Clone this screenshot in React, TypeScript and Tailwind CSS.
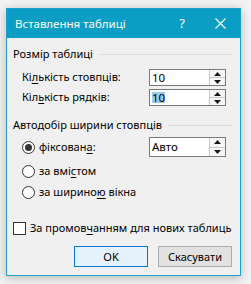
import React from 'react';

const font = { fontFamily: '"Noto Sans", "Liberation Sans", sans-serif' };

const U: React.FC<{ children: React.ReactNode }> = ({ children }) => (
  <span className="underline underline-offset-2 decoration-1">{children}</span>
);

const Spinner: React.FC = () => (
  <div className="flex flex-col w-[16px] h-full border-l border-[#c8c8c8]">
    <div className="flex-1 flex items-center justify-center bg-[#f7f7f7] border-b border-[#c8c8c8]">
      <svg width="7" height="4" viewBox="0 0 7 4"><path d="M0 4 L3.5 0 L7 4 Z" fill="#1a1a1a" /></svg>
    </div>
    <div className="flex-1 flex items-center justify-center bg-[#f7f7f7]">
      <svg width="7" height="4" viewBox="0 0 7 4"><path d="M0 0 L3.5 4 L7 0 Z" fill="#1a1a1a" /></svg>
    </div>
  </div>
);

const NumBox: React.FC<{ value: string; selected?: boolean; h?: string }> = ({ value, selected, h = 'h-[17px]' }) => (
  <div className={`flex w-[77px] ${h} border border-[#7a7a7a] bg-white`}>
    <div className="flex-1 flex items-center pl-[2px] text-[11.5px] leading-none">
      <span className={selected ? 'bg-[#99c9ef]' : ''}>{value}</span>
    </div>
    <Spinner />
  </div>
);

const GroupHeader: React.FC<{ title: string; className?: string }> = ({ title, className = '' }) => (
  <div className={`flex items-center h-[16px] ${className}`}>
    <span className="text-[11px] whitespace-nowrap">{title}</span>
    <div className="flex-1 h-px bg-[#dcdcdc] ml-[6px] mr-[1px]" />
  </div>
);

const Radio: React.FC<{ checked?: boolean }> = ({ checked }) => (
  <div className="w-[13px] h-[13px] rounded-full border border-[#333] bg-white flex items-center justify-center shrink-0">
    {checked && <div className="w-[7px] h-[7px] rounded-full bg-[#333]" />}
  </div>
);

const App: React.FC = () => {
  return (
    <div className="w-[251px] h-[284px] bg-[#f3f3f3] pt-[8px] pl-[6px] text-black" style={font}>
      <div className="w-[235px] h-[268px] border border-[#1ea0c8] bg-[#f0f0f0] flex flex-col shadow-[0_2px_10px_rgba(0,0,0,0.25)]">
        {/* Title bar */}
        <div className="h-[29px] bg-[#0a9ec4] flex items-center text-white">
          <span className="pl-[8px] text-[11.5px] flex-1 whitespace-nowrap">Вставлення таблиці</span>
          <span className="text-[13px] w-[20px] text-center mr-[23px]">?</span>
          <svg width="11" height="11" viewBox="0 0 11 11" className="mr-[14px]">
            <path d="M0.5 0.5 L10.5 10.5 M10.5 0.5 L0.5 10.5" stroke="#fff" strokeWidth="1.1" />
          </svg>
        </div>

        {/* Body */}
        <div className="flex flex-col px-[6px]">
          <GroupHeader title="Розмір таблиці" className="mt-[8px]" />

          <div className="flex items-center justify-between mt-[7px] pl-[9px] pr-[8px]">
            <span className="text-[11px] whitespace-nowrap">Кі<U>л</U>ькість стовпців:</span>
            <NumBox value="10" />
          </div>
          <div className="flex items-center justify-between mt-[3px] pl-[9px] pr-[8px]">
            <span className="text-[11px] whitespace-nowrap">Кіл<U>ь</U>кість рядків:</span>
            <NumBox value="10" selected />
          </div>

          <GroupHeader title="Автодобір ширини стовпців" className="mt-[11px]" />

          <div className="flex items-center h-[20px] mt-[4px] pl-[9px] pr-[8px]">
            <Radio checked />
            <span className="text-[11px] ml-[4px] flex-1 whitespace-nowrap">фіксован<U>а</U>:</span>
            <NumBox value="Авто" h="h-[20px]" />
          </div>
          <div className="flex items-center h-[20px] mt-[4px] pl-[9px]">
            <Radio />
            <span className="text-[11px] ml-[4px] whitespace-nowrap">за вмі<U>с</U>том</span>
          </div>
          <div className="flex items-center h-[20px] mt-[1px] pl-[9px]">
            <Radio />
            <span className="text-[11px] ml-[4px] whitespace-nowrap">за ширино<U>ю</U> вікна</span>
          </div>

          <div className="flex items-center h-[20px] mt-[16px]">
            <div className="w-[13px] h-[13px] border border-[#333] bg-white shrink-0" />
            <span className="text-[11px] ml-[4px] whitespace-nowrap">За промов<U>ч</U>анням для нових таблиць</span>
          </div>

          <div className="flex justify-end gap-[10px] mt-[8px] pr-[2px]">
            <button className="w-[74px] h-[21px] border border-[#0078d7] bg-[#e5f1fb] text-[11px] leading-none">OK</button>
            <button className="w-[74px] h-[21px] border border-[#adadad] bg-[#e1e1e1] text-[11px] leading-none">Скасувати</button>
          </div>
        </div>
      </div>
    </div>
  );
};

export default App;
